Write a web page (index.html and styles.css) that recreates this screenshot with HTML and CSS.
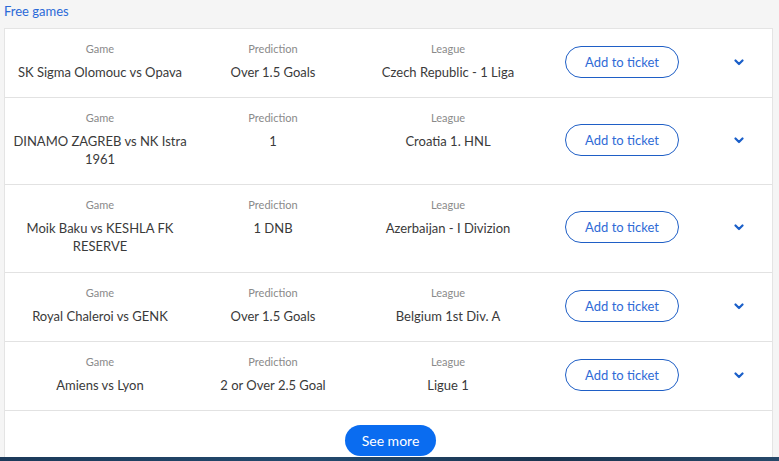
FILE: index.html
```html
<!DOCTYPE html>
<html>
<head>
<meta charset="utf-8">
<link rel="stylesheet" href="styles.css">
</head>
<body>
<div class="page">
  <div class="title">Free games</div>
  <div class="card">
    <div class="row">
      <div class="cell game"><div class="label">Game</div><div class="value">SK Sigma Olomouc vs Opava</div></div>
      <div class="cell"><div class="label">Prediction</div><div class="value">Over 1.5 Goals</div></div>
      <div class="cell"><div class="label">League</div><div class="value">Czech Republic - 1 Liga</div></div>
      <div class="action"><button class="add">Add to ticket</button></div>
      <div class="toggle"><svg width="10" height="7" viewBox="0 0 10 7"><path d="M1.5 1.5 L5 5 L8.5 1.5" fill="none" stroke="#1a5fc9" stroke-width="2.2" stroke-linecap="round" stroke-linejoin="round"/></svg></div>
    </div>
    <div class="row">
      <div class="cell game"><div class="label">Game</div><div class="value">DINAMO ZAGREB vs NK Istra 1961</div></div>
      <div class="cell"><div class="label">Prediction</div><div class="value">1</div></div>
      <div class="cell"><div class="label">League</div><div class="value">Croatia 1. HNL</div></div>
      <div class="action"><button class="add">Add to ticket</button></div>
      <div class="toggle"><svg width="10" height="7" viewBox="0 0 10 7"><path d="M1.5 1.5 L5 5 L8.5 1.5" fill="none" stroke="#1a5fc9" stroke-width="2.2" stroke-linecap="round" stroke-linejoin="round"/></svg></div>
    </div>
    <div class="row">
      <div class="cell game"><div class="label">Game</div><div class="value">Moik Baku vs KESHLA FK RESERVE</div></div>
      <div class="cell"><div class="label">Prediction</div><div class="value">1 DNB</div></div>
      <div class="cell"><div class="label">League</div><div class="value">Azerbaijan - I Divizion</div></div>
      <div class="action"><button class="add">Add to ticket</button></div>
      <div class="toggle"><svg width="10" height="7" viewBox="0 0 10 7"><path d="M1.5 1.5 L5 5 L8.5 1.5" fill="none" stroke="#1a5fc9" stroke-width="2.2" stroke-linecap="round" stroke-linejoin="round"/></svg></div>
    </div>
    <div class="row">
      <div class="cell game"><div class="label">Game</div><div class="value">Royal Chaleroi vs GENK</div></div>
      <div class="cell"><div class="label">Prediction</div><div class="value">Over 1.5 Goals</div></div>
      <div class="cell"><div class="label">League</div><div class="value">Belgium 1st Div. A</div></div>
      <div class="action"><button class="add">Add to ticket</button></div>
      <div class="toggle"><svg width="10" height="7" viewBox="0 0 10 7"><path d="M1.5 1.5 L5 5 L8.5 1.5" fill="none" stroke="#1a5fc9" stroke-width="2.2" stroke-linecap="round" stroke-linejoin="round"/></svg></div>
    </div>
    <div class="row">
      <div class="cell game"><div class="label">Game</div><div class="value">Amiens vs Lyon</div></div>
      <div class="cell"><div class="label">Prediction</div><div class="value">2 or Over 2.5 Goal</div></div>
      <div class="cell"><div class="label">League</div><div class="value">Ligue 1</div></div>
      <div class="action"><button class="add">Add to ticket</button></div>
      <div class="toggle"><svg width="10" height="7" viewBox="0 0 10 7"><path d="M1.5 1.5 L5 5 L8.5 1.5" fill="none" stroke="#1a5fc9" stroke-width="2.2" stroke-linecap="round" stroke-linejoin="round"/></svg></div>
    </div>
    <div class="more"><button class="see">See more</button></div>
  </div>
</div>
<div class="footer"></div>
</body>
</html>
```
FILE: styles.css
```css
html, body {
  margin: 0;
  padding: 0;
  height: 100%;
  overflow: hidden;
}
body {
  background: #f5f5f5;
  font-family: "Lato", "Open Sans", sans-serif;
  display: flex;
  flex-direction: column;
}
.page {
  flex: 1;
  padding: 0 6px 0 4px;
  overflow: hidden;
}
.title {
  color: #2b6ad8;
  font-size: 13px;
  height: 28px;
  line-height: 22px;
}
.card {
  background: #fff;
  border: 1px solid #e4e4e4;
  border-bottom: none;
}
.row {
  display: grid;
  grid-template-columns: 190px 156px 194px 154px 1fr;
  border-bottom: 1px solid #e2e2e2;
  padding: 12px 0 16px;
}
.row:nth-child(3) {
  padding-bottom: 17px;
}
.cell {
  text-align: center;
  padding: 0 8px;
}
.label {
  color: #8a8a8a;
  font-size: 11px;
  line-height: 16px;
}
.value {
  color: #3a3a3a;
  font-size: 13px;
  line-height: 18px;
  margin-top: 6px;
}
.action, .toggle {
  display: flex;
  align-items: center;
  justify-content: center;
  padding-top: 2px;
}
.toggle {
  padding-left: 6px;
}
.add {
  font-family: inherit;
  background: #fff;
  border: 1px solid #1f5fc6;
  color: #2f6bd6;
  font-size: 13px;
  width: 114px;
  height: 32px;
  border-radius: 16px;
  padding: 0;
}
.more {
  display: flex;
  justify-content: center;
  padding: 14px 0 6px 4px;
}
.see {
  font-family: inherit;
  background: #0a6cf0;
  color: #fff;
  border: none;
  font-size: 14px;
  width: 91px;
  height: 31px;
  border-radius: 16px;
}
.footer {
  height: 4px;
  background: linear-gradient(90deg, #1c3a5a, #234a6e 40%, #1a3450 70%, #27496a);
}
```
